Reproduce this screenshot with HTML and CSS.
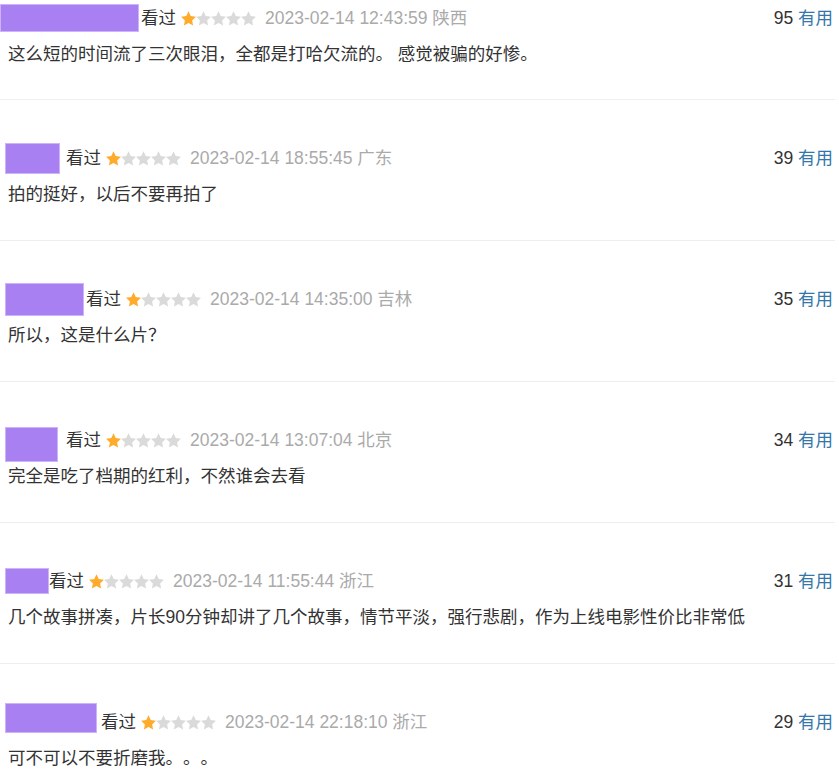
FILE: index.html
```html
<!DOCTYPE html>
<html lang="zh-CN">
  <head>
    <meta charset="UTF-8" />
    <meta name="viewport" content="width=device-width, initial-scale=1.0" />
    <title>短评</title>
    <link rel="stylesheet" href="styles.css">
  </head>
  <body>
    <svg width="0" height="0" class="defs">
      <defs>
        <path id="star" d="M12 1.5l3.1 6.6 7.2.9-5.3 5 1.4 7.1L12 17.6l-6.4 3.5L7 14l-5.3-5 7.2-.9z" />
      </defs>
    </svg>

    <div class="comments">
      <div class="comment-item">
        <div class="comment-info">
          <span class="user">
            <span class="mask m1"></span>
          </span>
          <span class="watched">看过</span>
          <span class="rating"><svg viewBox="1.6 1.4 20.8 20"><use href="#star" class="on" /></svg><svg viewBox="1.6 1.4 20.8 20"><use href="#star" /></svg><svg viewBox="1.6 1.4 20.8 20"><use href="#star" /></svg><svg viewBox="1.6 1.4 20.8 20"><use href="#star" /></svg><svg viewBox="1.6 1.4 20.8 20"><use href="#star" /></svg></span>
          <span class="time">2023-02-14 12:43:59 陕西</span>
          <span class="votes"><span class="count">95</span> <a href="#">有用</a></span>
        </div>
        <p class="short">这么短的时间流了三次眼泪，全都是打哈欠流的。 感觉被骗的好惨。</p>
      </div>

      <div class="comment-item">
        <div class="comment-info">
          <span class="user">
            <span class="mask m2"></span>
          </span>
          <span class="watched">看过</span>
          <span class="rating"><svg viewBox="1.6 1.4 20.8 20"><use href="#star" class="on" /></svg><svg viewBox="1.6 1.4 20.8 20"><use href="#star" /></svg><svg viewBox="1.6 1.4 20.8 20"><use href="#star" /></svg><svg viewBox="1.6 1.4 20.8 20"><use href="#star" /></svg><svg viewBox="1.6 1.4 20.8 20"><use href="#star" /></svg></span>
          <span class="time">2023-02-14 18:55:45 广东</span>
          <span class="votes"><span class="count">39</span> <a href="#">有用</a></span>
        </div>
        <p class="short">拍的挺好，以后不要再拍了</p>
      </div>

      <div class="comment-item">
        <div class="comment-info">
          <span class="user">
            <span class="mask m3"></span>
          </span>
          <span class="watched">看过</span>
          <span class="rating"><svg viewBox="1.6 1.4 20.8 20"><use href="#star" class="on" /></svg><svg viewBox="1.6 1.4 20.8 20"><use href="#star" /></svg><svg viewBox="1.6 1.4 20.8 20"><use href="#star" /></svg><svg viewBox="1.6 1.4 20.8 20"><use href="#star" /></svg><svg viewBox="1.6 1.4 20.8 20"><use href="#star" /></svg></span>
          <span class="time">2023-02-14 14:35:00 吉林</span>
          <span class="votes"><span class="count">35</span> <a href="#">有用</a></span>
        </div>
        <p class="short">所以，这是什么片？</p>
      </div>

      <div class="comment-item">
        <div class="comment-info">
          <span class="user">
            <span class="mask m4"></span>
          </span>
          <span class="watched">看过</span>
          <span class="rating"><svg viewBox="1.6 1.4 20.8 20"><use href="#star" class="on" /></svg><svg viewBox="1.6 1.4 20.8 20"><use href="#star" /></svg><svg viewBox="1.6 1.4 20.8 20"><use href="#star" /></svg><svg viewBox="1.6 1.4 20.8 20"><use href="#star" /></svg><svg viewBox="1.6 1.4 20.8 20"><use href="#star" /></svg></span>
          <span class="time">2023-02-14 13:07:04 北京</span>
          <span class="votes"><span class="count">34</span> <a href="#">有用</a></span>
        </div>
        <p class="short">完全是吃了档期的红利，不然谁会去看</p>
      </div>

      <div class="comment-item">
        <div class="comment-info">
          <span class="user">
            <span class="mask m5"></span>
          </span>
          <span class="watched">看过</span>
          <span class="rating"><svg viewBox="1.6 1.4 20.8 20"><use href="#star" class="on" /></svg><svg viewBox="1.6 1.4 20.8 20"><use href="#star" /></svg><svg viewBox="1.6 1.4 20.8 20"><use href="#star" /></svg><svg viewBox="1.6 1.4 20.8 20"><use href="#star" /></svg><svg viewBox="1.6 1.4 20.8 20"><use href="#star" /></svg></span>
          <span class="time">2023-02-14 11:55:44 浙江</span>
          <span class="votes"><span class="count">31</span> <a href="#">有用</a></span>
        </div>
        <p class="short">几个故事拼凑，片长90分钟却讲了几个故事，情节平淡，强行悲剧，作为上线电影性价比非常低</p>
      </div>

      <div class="comment-item">
        <div class="comment-info">
          <span class="user">
            <span class="mask m6"></span>
          </span>
          <span class="watched">看过</span>
          <span class="rating"><svg viewBox="1.6 1.4 20.8 20"><use href="#star" class="on" /></svg><svg viewBox="1.6 1.4 20.8 20"><use href="#star" /></svg><svg viewBox="1.6 1.4 20.8 20"><use href="#star" /></svg><svg viewBox="1.6 1.4 20.8 20"><use href="#star" /></svg><svg viewBox="1.6 1.4 20.8 20"><use href="#star" /></svg></span>
          <span class="time">2023-02-14 22:18:10 浙江</span>
          <span class="votes"><span class="count">29</span> <a href="#">有用</a></span>
        </div>
        <p class="short">可不可以不要折磨我。。。</p>
      </div>
    </div>
  </body>
</html>
```

FILE: styles.css
```css
body {
  margin: 0;
  padding: 0;
  background-color: #fff;
  font-family: "Liberation Sans", Arial, "Noto Sans CJK SC", sans-serif;
  font-size: 17.5px;
  color: #494949;
  text-spacing-trim: space-all;
}

.defs {
  position: absolute;
}

.comments {
  width: 835px;
}

.comment-item {
  padding: 45px 0 33px 0;
  border-bottom: 1px solid #eee;
}

.comment-item:first-child {
  padding-top: 5px;
  padding-bottom: 32px;
}

.comment-info {
  display: flex;
  align-items: center;
  height: 26px;
  line-height: 26px;
  padding-left: 5px;
}

.user {
  display: flex;
  align-items: center;
}

.mask {
  display: block;
  box-sizing: border-box;
  background-color: #a980f1;
  border: 1px solid #cdb3f8;
}

.m1 { width: 139px; height: 28px; margin-left: -5px; margin-right: 2px; }
.m2 { width: 55px; height: 31px; margin-right: 6px; }
.m3 { width: 79px; height: 33px; margin-right: 2px; }
.m4 { width: 53px; height: 35px; margin-top: 8px; margin-right: 8px; }
.m5 { width: 44px; height: 26px; margin-right: 0; }
.m6 { width: 92px; height: 30px; margin-top: -9px; margin-right: 4px; }

.watched {
  color: #333;
}

.rating {
  display: flex;
  margin: 0 9px 0 5px;
}

.rating svg {
  width: 15px;
  height: 15px;
  display: block;
}

.rating use {
  fill: #dadada;
}

.rating use.on {
  fill: #ffac2d;
}

.time {
  color: #aaa;
}

.votes {
  margin-left: auto;
  padding-right: 2px;
  color: #333;
}

.votes a {
  color: #37a;
  text-decoration: none;
}

.short {
  margin: 10px 0 0 0;
  padding-left: 8px;
  line-height: 26px;
  color: #333;
}
```
